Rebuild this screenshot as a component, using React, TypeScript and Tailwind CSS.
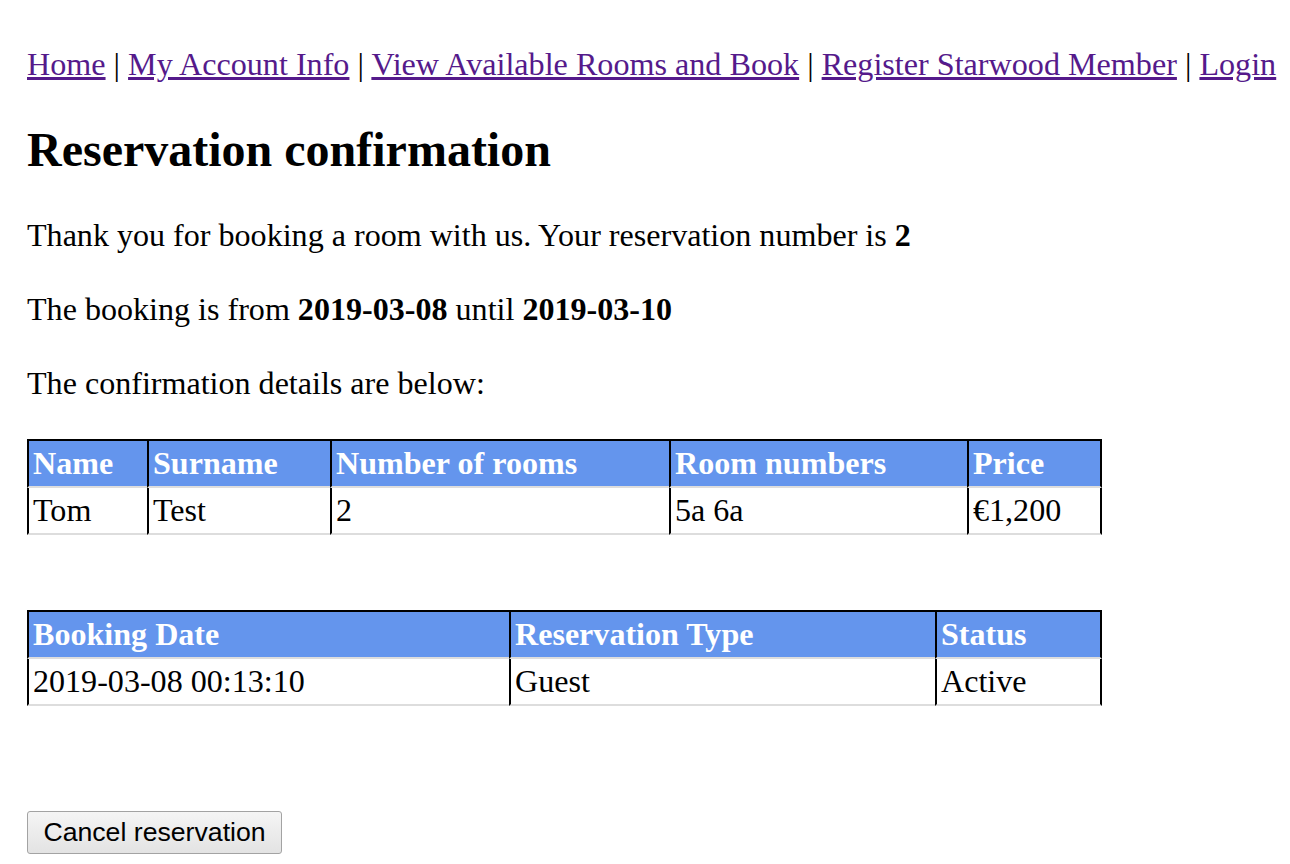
const navLinks = [
  "Home",
  "My Account Info",
  "View Available Rooms and Book",
  "Register Starwood Member",
  "Login",
]

type Col = { label: string; width: string }

const DataTable = ({ cols, row }: { cols: Col[]; row: string[] }) => {
  return (
    <table className="border-separate border-spacing-0 table-fixed w-[1075px]">
      <colgroup>
        {cols.map((c) => (
          <col key={c.label} className={c.width} />
        ))}
      </colgroup>
      <thead>
        <tr>
          {cols.map((c, i) => (
            <th
              key={c.label}
              className={
                "bg-[#6495ed] text-white font-bold text-left px-1 py-1 leading-[37px] border-t-2 border-t-black border-l-2 border-l-black border-b-2 border-b-[#dddddd] " +
                (i === cols.length - 1 ? "border-r-2 border-r-black" : "")
              }
            >
              {c.label}
            </th>
          ))}
        </tr>
      </thead>
      <tbody>
        <tr>
          {row.map((v, i) => (
            <td
              key={i}
              className={
                "text-left px-1 py-1 leading-[37px] border-l-2 border-l-black border-b-2 border-b-[#dddddd] " +
                (i === row.length - 1 ? "border-r-2 border-r-black" : "")
              }
            >
              {v}
            </td>
          ))}
        </tr>
      </tbody>
    </table>
  )
}

export default function App() {
  return (
    <div className="min-h-[864px] bg-white text-black pl-[27px] pt-[46px] pb-4 text-[32.1px] leading-[37px] font-['Liberation_Serif',serif]">
      <div className="text-[32.15px]">
        {navLinks.map((l, i) => (
          <span key={l}>
            {i > 0 && " | "}
            <a href="#" className="text-[#551a8b] underline">
              {l}
            </a>
          </span>
        ))}
      </div>

      <h1 className="mt-[39px] text-[48px] leading-[55px] font-bold">Reservation confirmation</h1>

      <p className="mt-[40px]">
        Thank you for booking a room with us. Your reservation number is <b>2</b>
      </p>
      <p className="mt-[37px]">
        The booking is from <b>2019-03-08</b> until <b>2019-03-10</b>
      </p>
      <p className="mt-[37px]">The confirmation details are below:</p>

      <div className="mt-[37px]">
        <DataTable
          cols={[
            { label: "Name", width: "w-[120px]" },
            { label: "Surname", width: "w-[183px]" },
            { label: "Number of rooms", width: "w-[339px]" },
            { label: "Room numbers", width: "w-[298px]" },
            { label: "Price", width: "w-[135px]" },
          ]}
          row={["Tom", "Test", "2", "5a 6a", "€1,200"]}
        />
      </div>

      <div className="mt-[75px]">
        <DataTable
          cols={[
            { label: "Booking Date", width: "w-[482px]" },
            { label: "Reservation Type", width: "w-[426px]" },
            { label: "Status", width: "w-[167px]" },
          ]}
          row={["2019-03-08 00:13:10", "Guest", "Active"]}
        />
      </div>

      <div className="mt-[105px]">
        <button className="w-[255px] h-[43px] border border-[#a3a3a3] rounded-[3px] bg-gradient-to-b from-[#f5f5f5] to-[#e3e3e3] text-[26.67px] leading-none text-black font-['Liberation_Sans',sans-serif]">
          Cancel reservation
        </button>
      </div>
    </div>
  )
}
